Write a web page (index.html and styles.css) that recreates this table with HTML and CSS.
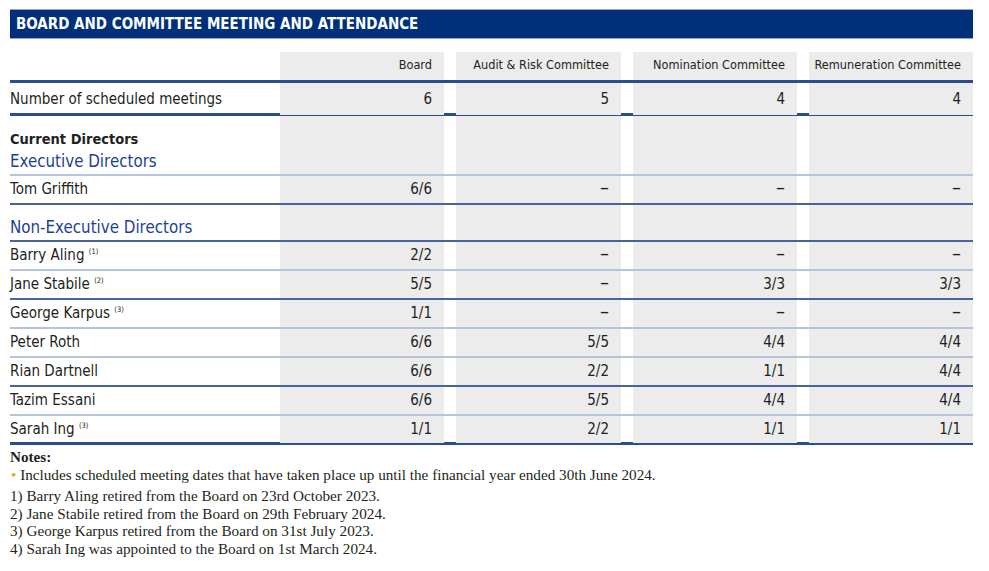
FILE: index.html
```html
<!DOCTYPE html>
<html lang="en">
<head>
<meta charset="utf-8">
<title>Board and Committee Meeting and Attendance</title>
<link rel="stylesheet" href="styles.css">
</head>
<body>
<div class="page">
  <h1 class="banner">BOARD AND COMMITTEE MEETING AND ATTENDANCE</h1>

  <div class="table">
    <div class="row head line-thick">
      <div class="cell label"></div>
      <div class="cell num">Board</div>
      <div class="cell num">Audit &amp; Risk Committee</div>
      <div class="cell num">Nomination Committee</div>
      <div class="cell num">Remuneration Committee</div>
    </div>
    <div class="row meetings line-thick">
      <div class="cell label">Number of scheduled meetings</div>
      <div class="cell num">6</div>
      <div class="cell num">5</div>
      <div class="cell num">4</div>
      <div class="cell num">4</div>
    </div>
    <div class="row section line-light">
      <div class="cell label">
        <div class="group-title">Current Directors</div>
        <div class="group-sub">Executive Directors</div>
      </div>
      <div class="cell num"></div>
      <div class="cell num"></div>
      <div class="cell num"></div>
      <div class="cell num"></div>
    </div>
    <div class="row line-dark">
      <div class="cell label">Tom Griffith</div>
      <div class="cell num">6/6</div>
      <div class="cell num"><span class="dash">–</span></div>
      <div class="cell num"><span class="dash">–</span></div>
      <div class="cell num"><span class="dash">–</span></div>
    </div>
    <div class="row subsection line-dark">
      <div class="cell label"><div class="group-sub">Non-Executive Directors</div></div>
      <div class="cell num"></div>
      <div class="cell num"></div>
      <div class="cell num"></div>
      <div class="cell num"></div>
    </div>
    <div class="row line-light">
      <div class="cell label">Barry Aling <sup>(1)</sup></div>
      <div class="cell num">2/2</div>
      <div class="cell num"><span class="dash">–</span></div>
      <div class="cell num"><span class="dash">–</span></div>
      <div class="cell num"><span class="dash">–</span></div>
    </div>
    <div class="row line-dark">
      <div class="cell label">Jane Stabile <sup>(2)</sup></div>
      <div class="cell num">5/5</div>
      <div class="cell num"><span class="dash">–</span></div>
      <div class="cell num">3/3</div>
      <div class="cell num">3/3</div>
    </div>
    <div class="row line-light">
      <div class="cell label">George Karpus <sup>(3)</sup></div>
      <div class="cell num">1/1</div>
      <div class="cell num"><span class="dash">–</span></div>
      <div class="cell num"><span class="dash">–</span></div>
      <div class="cell num"><span class="dash">–</span></div>
    </div>
    <div class="row line-light">
      <div class="cell label">Peter Roth</div>
      <div class="cell num">6/6</div>
      <div class="cell num">5/5</div>
      <div class="cell num">4/4</div>
      <div class="cell num">4/4</div>
    </div>
    <div class="row line-dark">
      <div class="cell label">Rian Dartnell</div>
      <div class="cell num">6/6</div>
      <div class="cell num">2/2</div>
      <div class="cell num">1/1</div>
      <div class="cell num">4/4</div>
    </div>
    <div class="row line-light">
      <div class="cell label">Tazim Essani</div>
      <div class="cell num">6/6</div>
      <div class="cell num">5/5</div>
      <div class="cell num">4/4</div>
      <div class="cell num">4/4</div>
    </div>
    <div class="row line-thick">
      <div class="cell label">Sarah Ing <sup>(3)</sup></div>
      <div class="cell num">1/1</div>
      <div class="cell num">2/2</div>
      <div class="cell num">1/1</div>
      <div class="cell num">1/1</div>
    </div>
  </div>

  <div class="notes">
    <div class="notes-title">Notes:</div>
    <div class="bullet"><span class="dot">•</span> Includes scheduled meeting dates that have taken place up until the financial year ended 30th June 2024.</div>
    <ol class="footnotes">
      <li>1) Barry Aling retired from the Board on 23rd October 2023.</li>
      <li>2) Jane Stabile retired from the Board on 29th February 2024.</li>
      <li>3) George Karpus retired from the Board on 31st July 2023.</li>
      <li>4) Sarah Ing was appointed to the Board on 1st March 2024.</li>
    </ol>
  </div>
</div>
</body>
</html>
```

FILE: styles.css
```css
* { box-sizing: border-box; }

html, body {
  margin: 0;
  padding: 0;
  background: #ffffff;
}

.page {
  padding: 9px 16px 0 10px;
  width: 989px;
  font-family: "DejaVu Sans Condensed", "Liberation Sans Narrow", "Roboto", sans-serif;
  color: #231f20;
}

.banner {
  margin: 0;
  width: 963px;
  height: 30px;
  background: #00307a;
  border-top: 1px solid #8fa2c9;
  border-bottom: 1px solid #8fa2c9;
  color: #ffffff;
  font-size: 15px;
  font-weight: bold;
  line-height: 28px;
  padding-left: 6px;
}

.table {
  margin-top: 13px;
  width: 963px;
}

.row {
  display: grid;
  grid-template-columns: 258px 164px 165px 164px 164px;
  column-gap: 12px;
  height: 29px;
}

.line-thick { border-bottom: 3px solid #2c4c91; }
.line-dark { border-bottom: 2px solid #4863a1; }
.line-light { border-bottom: 2px solid #b7c3db; }

.cell {
  font-size: 15px;
  line-height: 27px;
  white-space: nowrap;
}

.cell.num {
  background: #ececec;
  text-align: right;
  padding-right: 12px;
}

.dash {
  font-size: 20px;
  line-height: 0;
}

.head { height: 31px; }
.head .cell { font-size: 12.6px; line-height: 25px; }

.meetings { height: 33px; }
.meetings .cell { line-height: 32px; }

.section { height: 60px; }
.section .label { padding-top: 12px; }

.subsection { height: 37px; }
.subsection .label { padding-top: 11px; }

.group-title {
  font-weight: bold;
  font-size: 14.5px;
  line-height: 22px;
}

.group-sub {
  color: #1d3f94;
  line-height: 22px;
  font-size: 16.8px;
}

sup {
  font-size: 7.5px;
  vertical-align: 6px;
  line-height: 0;
}

.notes {
  font-family: "Liberation Serif", serif;
  font-size: 15.2px;
  color: #231f20;
  padding-top: 3px;
}

.notes-title {
  font-weight: bold;
  line-height: 18px;
}

.bullet {
  line-height: 18px;
  padding-left: 1px;
}

.dot {
  color: #e3a72f;
}

.footnotes {
  list-style: none;
  margin: 3px 0 0;
  padding: 0;
}

.footnotes li {
  line-height: 17.5px;
}
```
